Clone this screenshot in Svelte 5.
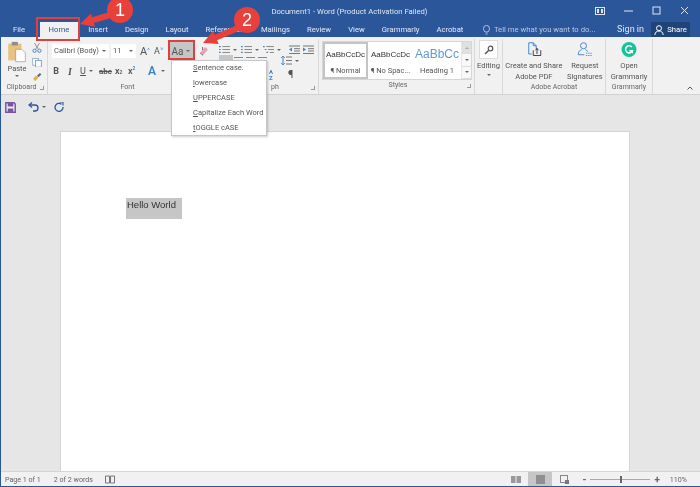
<script>
	const tabs = ['File', 'Home', 'Insert', 'Design', 'Layout', 'References', 'Mailings', 'Review', 'View', 'Grammarly', 'Acrobat'];
	const cases = [
		['S', 'entence case.'],
		['l', 'owercase'],
		['U', 'PPERCASE'],
		['C', 'apitalize Each Word'],
		['t', 'OGGLE cASE']
	];
	const styles = [
		{ sample: 'AaBbCcDc', name: '¶ Normal', cls: 'sel' },
		{ sample: 'AaBbCcDc', name: '¶ No Spac...', cls: '' },
		{ sample: 'AaBbCc', name: 'Heading 1', cls: 'head' }
	];
</script>

<div class="word">
	<header class="titlebar">
		<span class="title">Document1 - Word (Product Activation Failed)</span>
		<div class="winctl">
			<svg width="10" height="8" viewBox="0 0 10 8"><rect x="0.5" y="0.5" width="9" height="7" fill="none" stroke="#dfe6f2"/><rect x="2" y="2" width="2" height="4" fill="#dfe6f2"/><rect x="6" y="2" width="2" height="4" fill="#dfe6f2"/></svg>
			<svg width="9" height="9" viewBox="0 0 9 9"><path d="M0 5h9" stroke="#dfe6f2"/></svg>
			<svg width="9" height="9" viewBox="0 0 9 9"><rect x="1" y="1" width="7" height="7" fill="none" stroke="#dfe6f2"/></svg>
			<svg width="9" height="9" viewBox="0 0 9 9"><path d="M1 1l7 7M8 1l-7 7" stroke="#dfe6f2"/></svg>
		</div>
	</header>

	<nav class="tabs">
		{#each tabs as t}
			<span class="tab" class:active={t === 'Home'}>{t}</span>
		{/each}
		<span class="tell">
			<svg width="7" height="10" viewBox="0 0 7 10"><path d="M2 7C1 5.500.5 5 .5 3.500a3 3 0 0 1 6 0C6.500 5 6 5.500 5 7zM2.500 9h2" fill="none" stroke="#d5deee" stroke-width=".8"/></svg>
			Tell me what you want to do...
		</span>
		<span class="signin">Sign in</span>
		<span class="share">
			<svg width="10" height="10" viewBox="0 0 10 10"><circle cx="5" cy="3.200" r="2.500" fill="none" stroke="#fff"/><path d="M.8 10c.4-3 2-4 4.200-4s3.800 1 4.200 4" fill="none" stroke="#fff"/></svg>
			Share
		</span>
	</nav>

	<section class="ribbon">
		<div class="group clipboard">
			<div class="body clip-body">
				<div class="paste">
					<svg width="20" height="22" viewBox="0 0 22 25">
						<rect x="1" y="3" width="15" height="19" fill="#e8c27f"/>
						<rect x="5" y="1" width="7" height="4" fill="#8d8d8d"/>
						<path d="M9.500 9.500h7l4 4v10h-11z" fill="#fff" stroke="#8a8a8a" stroke-width=".7"/>
					</svg>
					<span>Paste</span>
					<i class="caret"></i>
				</div>
				<div class="clip-tools">
					<svg width="10" height="10" viewBox="0 0 10 10"><path d="M2.500 0l3.500 6M7.500 0L4 6" stroke="#777" stroke-width=".8"/><circle cx="2.500" cy="8" r="1.700" fill="none" stroke="#3f83c8"/><circle cx="7.500" cy="8" r="1.700" fill="none" stroke="#3f83c8"/></svg>
					<svg width="10" height="10" viewBox="0 0 10 10"><rect x=".5" y=".5" width="6" height="7" fill="#fff" stroke="#9ab6d6"/><rect x="3.500" y="2.500" width="6" height="7" fill="#fff" stroke="#7fa0c6"/></svg>
					<svg width="10" height="10" viewBox="0 0 10 10"><path d="M5 4l3-3 1.500 1.500-3 3z" fill="#666"/><path d="M1 7l3-3.500L6.500 6 3 9.500z" fill="#e3b04b"/></svg>
				</div>
			</div>
			<div class="label pad">Clipboard<i class="launch"></i></div>
		</div>

		<div class="group font">
			<div class="body rows">
				<div class="row">
					<span class="combo name">Calibri (Body)<i class="caret"></i></span>
					<span class="combo size">11<i class="caret"></i></span>
					<span class="grow">A<sup>^</sup></span>
					<span class="shrink">A<sup>˅</sup></span>
					<span class="change">Aa<i class="caret"></i></span>
					<svg class="eraser" width="10" height="11" viewBox="0 0 10 11"><path d="M1 7l5-6 3 2.500-5 6z" fill="#e8a0b2"/><path d="M1 7l3 2.500" stroke="#888"/><path d="M3.500 1v3" stroke="#777"/></svg>
				</div>
				<div class="row fmt">
					<b>B</b>
					<em>I</em>
					<u>U</u><i class="caret"></i>
					<s>abc</s>
					<span>x<small>2</small></span>
					<span>x<sup class="up">2</sup></span>
					<span class="effect">A</span><i class="caret"></i>
				</div>
			</div>
			<div class="label pad-font">Font</div>
		</div>

		<div class="group para">
			<div class="body para-rows">
				<div class="row para-top">
					<svg width="11" height="9" viewBox="0 0 13 9"><path d="M0 1h2M0 4.500h2M0 8h2" stroke="#3f83c8" stroke-width="1.400"/><path d="M4 1h9M4 4.500h9M4 8h9" stroke="#777"/></svg><i class="caret"></i>
					<svg width="11" height="9" viewBox="0 0 13 9"><path d="M0 1h2M0 4.500h2M0 8h2" stroke="#3f83c8" stroke-width="1.400"/><path d="M4 1h9M4 4.500h9M4 8h9" stroke="#777"/></svg><i class="caret"></i>
					<svg width="11" height="9" viewBox="0 0 13 9"><path d="M0 1h2M2 4.500h2M4 8h2" stroke="#3f83c8" stroke-width="1.400"/><path d="M4 1h9M6 4.500h7M8 8h5" stroke="#777"/></svg><i class="caret"></i>
					<svg class="indent" width="11" height="9" viewBox="0 0 11 9"><path d="M0 1h11M5 3.700h6M5 6h6M0 8.500h11" stroke="#777"/><path d="M3 2.500L0 4.500l3 2z" fill="#3f83c8"/></svg>
					<svg class="indent2" width="11" height="9" viewBox="0 0 11 9"><path d="M0 1h11M5 3.700h6M5 6h6M0 8.500h11" stroke="#777"/><path d="M0 2.500l3 2-3 2z" fill="#3f83c8"/></svg>
				</div>
				<div class="row para-mid">
					<span class="align-on"></span>
					<span class="align-line"></span>
					<span class="align-line"></span>
					<span class="align-line"></span>
					<svg class="spacing" width="11" height="11" viewBox="0 0 11 11"><path d="M2 1v9" stroke="#3f83c8"/><path d="M0 3l2-2 2 2M0 8l2 2 2-2" fill="none" stroke="#3f83c8" stroke-width=".8"/><path d="M5 2h6M5 5.500h6M5 9h6" stroke="#777"/></svg><i class="caret"></i>
				</div>
				<div class="row para-bot">
					<span class="sort">A<br />Z</span>
					<span class="pilcrow">¶</span>
				</div>
			</div>
			<div class="label para-label">ph<i class="launch"></i></div>
		</div>

		<div class="group styles">
			<div class="body gallery">
				{#each styles as s}
					<div class="style {s.cls}">
						<span class="sample">{s.sample}</span>
						<span class="sname">{s.name}</span>
					</div>
				{/each}
				<div class="scroll">
					<span class="off"><i class="caret up"></i></span>
					<span><i class="caret"></i></span>
					<span><i class="caret"></i></span>
				</div>
			</div>
			<div class="label">Styles<i class="launch"></i></div>
		</div>

		<div class="group editing">
			<div class="body stack">
				<span class="find">
					<svg width="10" height="10" viewBox="0 0 10 10"><circle cx="6.500" cy="3.500" r="2.300" fill="none" stroke="#555" stroke-width="1.200"/><path d="M4.800 5.200L1 9" stroke="#555" stroke-width="1.500"/></svg>
				</span>
				<span class="big">Editing</span>
				<i class="caret"></i>
			</div>
			<div class="label">&nbsp;</div>
		</div>

		<div class="group acrobat">
			<div class="body tools">
				<div class="tool">
					<svg width="18" height="18" viewBox="0 0 20 20"><path d="M3 1h6l4 4v5M9 1v4h4M3 1v15h4" fill="none" stroke="#2f7fd1" stroke-width="1.200"/><path d="M9 11v7h10v-7M14 16v-7M12 11l2-2.500 2 2.500" fill="none" stroke="#222" stroke-width="1.100"/></svg>
					<span>Create and Share<br />Adobe PDF</span>
				</div>
				<div class="tool">
					<svg width="20" height="18" viewBox="0 0 20 20"><circle cx="8" cy="5" r="4" fill="none" stroke="#2f7fd1" stroke-width="1.200"/><path d="M1 17c0-4 2-6 4.500-7M10.500 10c1.500.5 2.500 1.500 3 3M1 17h8" fill="none" stroke="#2f7fd1" stroke-width="1.200"/><path d="M11 15h8M11 18h8" stroke="#2f7fd1" stroke-dasharray="2 1"/></svg>
					<span>Request<br />Signatures</span>
				</div>
			</div>
			<div class="label">Adobe Acrobat</div>
		</div>

		<div class="group grammarly">
			<div class="body tools">
				<div class="tool">
					<svg width="18" height="18" viewBox="0 0 18 18"><circle cx="9" cy="9" r="9" fill="#15c39a"/><path d="M12.500 6a4.300 4.300 0 1 0 .6 4.500H9.500" fill="none" stroke="#fff" stroke-width="1.800"/><path d="M13 11v2.500" stroke="#fff" stroke-width="1.400"/></svg>
					<span>Open<br />Grammarly</span>
				</div>
			</div>
			<div class="label">Grammarly</div>
		</div>

		<div class="collapse">
			<svg width="6" height="4" viewBox="0 0 6 4"><path d="M.5 3.500L3 1l2.500 2.500" fill="none" stroke="#555"/></svg>
		</div>
	</section>

	<div class="qat">
		<svg width="11" height="11" viewBox="0 0 10 10"><path d="M.7.7h7.500l1.100 1.100v7.500H.7z" fill="none" stroke="#7a4fa8" stroke-width="1.300"/><rect x="2.500" y="1" width="5" height="3" fill="#7a4fa8"/><rect x="2.500" y="6" width="5" height="3" fill="#7a4fa8"/></svg>
		<svg class="undo" width="11" height="10" viewBox="0 0 11 10"><path d="M1.500 3h5.500a3 3 0 0 1 0 6H5" fill="none" stroke="#2b579a" stroke-width="1.300"/><path d="M4 .5L1 3l3 2.500" fill="none" stroke="#2b579a" stroke-width="1.200"/></svg>
		<i class="caret"></i>
		<svg class="redo" width="10" height="10" viewBox="0 0 10 10"><path d="M7.500 2.200A4 4 0 1 0 9 5" fill="none" stroke="#2b579a" stroke-width="1.300"/><path d="M5.500 0h3.500v3.500" fill="none" stroke="#2b579a" stroke-width="1.100"/></svg>
	</div>

	<main class="canvas">
		<div class="page">
			<span class="selected">Hello World</span>
		</div>
	</main>

	<footer class="status">
		<span>Page 1 of 1</span>
		<span class="words">2 of 2 words</span>
		<svg class="proof" width="10" height="9" viewBox="0 0 10 9"><path d="M.5 1h4v7h-4zM5.500 1h4v7h-4z" fill="none" stroke="#777"/></svg>
		<div class="views">
			<span class="view"><svg width="10" height="9" viewBox="0 0 10 9"><path d="M0 1h4.500v7H0zM5.500 1H10v7H5.500z" fill="#999"/></svg></span>
			<span class="view on"><svg width="9" height="9" viewBox="0 0 9 9"><rect width="9" height="9" fill="#8f8f8f"/></svg></span>
			<span class="view"><svg width="9" height="9" viewBox="0 0 9 9"><rect x=".5" y=".5" width="7" height="7" fill="none" stroke="#888"/><rect x="5" y="5" width="4" height="4" fill="#777"/></svg></span>
		</div>
		<div class="zoom">
			<span>-</span>
			<div class="slider"><i></i></div>
			<span>+</span>
		</div>
		<span class="pct">110%</span>
	</footer>

	<!-- dropdown of the change-case button -->
	<div class="menu">
		{#each cases as [k, rest]}
			<div class="item"><u>{k}</u>{rest}</div>
		{/each}
	</div>

	<!-- tutorial annotations drawn over the screenshot -->
	<div class="hl hl-home"></div>
	<div class="hl hl-case"></div>
	<svg class="notes" width="700" height="487" viewBox="0 0 700 487">
		<path d="M109.100 12.100L92.100 17.200 91 13.400 80 24l15 2.800-1.100-3.800 17-5.100z" fill="#e8403a"/>
		<circle cx="120" cy="10" r="13" fill="#e8403a"/>
		<path d="M236.800 25.200L214.700 34.700l-1.600-3.600L203 43l15.700.9-1.600-3.600 22.100-9.500z" fill="#e8403a"/>
		<circle cx="247" cy="20" r="13" fill="#e8403a"/>
		<text x="120" y="16" class="num">1</text>
		<text x="247" y="26" class="num">2</text>
	</svg>
</div>

<style>
	:global(body) { margin: 0; }
	.word {
		position: relative;
		width: 700px;
		height: 487px;
		overflow: hidden;
		display: flex;
		flex-direction: column;
		box-sizing: border-box;
		border-left: 1px solid #2b579a;
		border-bottom: 1px solid #2b579a;
		background: #e6e6e6;
		font-family: Roboto, 'Open Sans', sans-serif;
		font-size: 7.500px;
		color: #555;
		filter: blur(0.3px);
	}

	.titlebar {
		height: 22px;
		flex-shrink: 0;
		background: #2b579a;
		display: flex;
		align-items: center;
		justify-content: center;
		position: relative;
		color: #dfe6f2;
		font-size: 7.700px;
	}
	.title { margin-left: -2px; }
	.winctl {
		position: absolute;
		right: 11px;
		top: 6px;
		display: flex;
		align-items: center;
		gap: 19px;
	}

	.tabs {
		height: 15px;
		flex-shrink: 0;
		background: #2b579a;
		display: flex;
		align-items: stretch;
		color: #e3e9f4;
		font-size: 7.700px;
		padding-left: 3.500px;
	}
	.tab { padding: 0 8.500px; line-height: 15px; }
	.tab.active { background: #f1f1f1; color: #2b579a; padding: 0 8.500px; margin: 0 2px 0 6.500px; }
	.tell { display: flex; align-items: center; gap: 4px; margin-left: 11px; color: #b9c7df; white-space: nowrap; }
	.signin { line-height: 15px; margin-left: auto; font-size: 9px; }
	.share {
		margin: 0 10px 0 7px;
		width: 39px;
		background: #1f4478;
		display: flex;
		align-items: center;
		justify-content: center;
		gap: 3px;
		color: #fff;
	}

	.ribbon {
		height: 58px;
		flex-shrink: 0;
		box-sizing: border-box;
		background: #f1f1f1;
		border-bottom: 1px solid #d2d2d2;
		display: flex;
	}
	.group {
		box-sizing: border-box;
		display: flex;
		flex-direction: column;
		border-right: 1px solid #d8d8d8;
		margin-top: 2px;
	}
	.body { flex: 1; min-height: 0; }
	.label {
		height: 12px;
		line-height: 11px;
		text-align: center;
		position: relative;
		color: #666;
		font-size: 7px;
	}
	.label.pad { padding-right: 5px; }
	.label.pad-font { padding-right: 10px; }
	.label.para-label { text-align: left; padding-left: 54px; }
	.launch {
		position: absolute;
		right: 3px;
		top: 4px;
		width: 3px;
		height: 3px;
		border: 1px solid #999;
		border-width: 0 1px 1px 0;
	}
	.caret {
		display: inline-block;
		width: 0;
		height: 0;
		border: 2px solid transparent;
		border-top: 2.500px solid #666;
		border-bottom: 0;
		vertical-align: middle;
	}
	.caret.up { border-top: 0; border-bottom: 2.500px solid #aaa; }

	.clipboard { width: 47px; }
	.clip-body { display: flex; padding: 2px 0 0 6px; }
	.paste { width: 20px; display: flex; flex-direction: column; align-items: center; gap: 1px; line-height: 10px; }
	.clip-tools { display: flex; flex-direction: column; gap: 5px; margin: 2px 0 0 5px; }

	.font { width: 169px; border-right: none; }
	.rows { display: flex; flex-direction: column; padding: 5px 0 0 4px; gap: 6px; }
	.row { display: flex; align-items: center; height: 14px; }
	.combo {
		box-sizing: border-box;
		height: 14px;
		background: #fff;
		font-size: 7.500px;
		line-height: 14px;
		padding-left: 2px;
		display: flex;
		align-items: center;
		justify-content: space-between;
		padding-right: 3px;
		white-space: nowrap;
	}
	.name { width: 57px; margin-right: 2px; }
	.size { width: 25px; margin-right: 4px; }
	.grow, .shrink { font-size: 11px; width: 14px; color: #555; }
	.shrink { font-size: 9px; width: 12px; }
	.grow sup, .shrink sup { font-size: 6px; color: #2f7fd1; line-height: 0; vertical-align: 3px; }
	.change {
		width: 24px;
		height: 18px;
		margin-left: 3px;
		background: #c6c6c6;
		font-size: 10px;
		display: flex;
		align-items: center;
		justify-content: center;
		gap: 3px;
	}
	.eraser { margin-left: 6px; }
	.fmt { margin-left: -3px; }
	.fmt b, .fmt em, .fmt u { width: 14px; text-align: center; font-size: 9px; color: #555; }
	.fmt em { font-family: 'Liberation Serif', serif; font-size: 10px; font-weight: bold; }
	.fmt u { width: 12px; }
	.fmt s { margin-left: 6px; font-size: 8px; font-weight: bold; width: 16px; }
	.fmt span { width: 13px; font-size: 9px; font-weight: 600; }
	.fmt small { font-size: 5px; }
	.up { font-size: 5px; line-height: 0; color: #2f7fd1; }
	.fmt .effect { width: 13px; margin-left: 7px; font-size: 12px; color: #3f83c8; }

	.para { width: 102px; }
	.para-rows { display: flex; flex-direction: column; padding: 6px 0 0 2px; }
	.para-top { height: 10px; }
	.para-top .caret { margin: 0 4px 0 3px; }
	.para-top .indent { margin-left: 4px; }
	.para-top .indent2 { margin-left: 3px; }
	.para-mid { height: 15px; }
	.align-on { width: 14px; height: 8px; background: #c6c6c6; margin: -3px 1px 0 0; }
	.align-line { width: 9px; height: 6px; border-top: 1px solid #888; margin: 0 3px 0 0; }
	.spacing { margin-left: 11px; }
	.para-mid .caret { margin-left: 3px; }
	.para-bot { height: 16px; padding-left: 50px; gap: 15px; }
	.sort { font-size: 6px; line-height: 6px; color: #3f83c8; font-weight: 700; }
	.pilcrow { font-size: 11px; color: #555; }

	.styles { width: 156px; padding-left: 3px; }
	.gallery { display: flex; margin-top: 2px; height: 39px; flex: none; border: 1px solid #d6d6d6; background: #e6e6e6; box-sizing: border-box; width: 150px; }
	.style {
		width: 45px;
		background: #fff;
		display: flex;
		flex-direction: column;
		align-items: center;
		gap: 6px;
		padding-top: 7px;
		box-sizing: border-box;
		overflow: hidden;
		white-space: nowrap;
		font-size: 7.500px;
	}
	.style.sel { border: 2px solid #c4c4c4; padding-top: 5px; }
	.sample { font-family: 'Liberation Sans', sans-serif; font-size: 8px; color: #333; height: 11px; line-height: 11px; }
	.style.head { width: 48px; }
	.head .sample { font-size: 12px; color: #5b9bd5; }
	.scroll { width: 9px; display: flex; flex-direction: column; margin-left: 1px; flex: 1; }
	.scroll span { flex: 1; display: flex; align-items: center; justify-content: center; background: #f8f8f8; border-bottom: 1px solid #ddd; }
	.scroll .off { background: #e0e0e0; }

	.editing { width: 28px; }
	.stack { display: flex; flex-direction: column; align-items: center; padding-top: 1px; }
	.find {
		width: 17px;
		height: 17px;
		background: #fff;
		border: 1px solid #dcdcdc;
		display: flex;
		align-items: center;
		justify-content: center;
	}
	.big { font-size: 7.600px; line-height: 10px; margin: 2px 0 3px; }

	.acrobat { width: 103px; }
	.grammarly { width: 47px; }
	.tools { display: flex; justify-content: space-around; padding-top: 3px; }
	.tool {
		display: flex;
		flex-direction: column;
		align-items: center;
		text-align: center;
		line-height: 11px;
		gap: 3px;
		white-space: nowrap;
	}
	.collapse { flex: 1; display: flex; justify-content: flex-end; align-items: flex-end; padding: 0 7px 4px 0; }

	.qat {
		height: 24px;
		flex-shrink: 0;
		display: flex;
		align-items: center;
		padding-left: 4px;
		gap: 3px;
	}
	.undo { margin-left: 9px; }
	.redo { margin-left: 5px; }

	.canvas { flex: 1; min-height: 0; padding: 12px 70px 0 59px; }
	.page {
		height: 100%;
		background: #fff;
		box-sizing: border-box;
		border: 1px solid #d4d4d4;
		border-bottom: 0;
		padding: 66px 0 0 65px;
		color: #333;
		font-family: 'Liberation Sans', sans-serif;
		font-size: 9.500px;
	}
	.selected {
		display: block;
		width: 56px;
		height: 21px;
		padding-left: 1px;
		box-sizing: border-box;
		background: #c6c6c6;
		line-height: 14px;
	}

	.status {
		height: 14px;
		flex-shrink: 0;
		background: #f1f1f1;
		border-top: 1px solid #d4d4d4;
		display: flex;
		align-items: center;
		padding-left: 4px;
		font-size: 7.100px;
		color: #666;
	}
	.words { margin-left: 13px; }
	.proof { margin-left: 12px; }
	.views { margin-left: auto; display: flex; align-self: stretch; }
	.view { width: 24px; display: flex; align-items: center; justify-content: center; }
	.view.on { background: #c6c6c6; }
	.zoom { display: flex; align-items: center; margin-left: 6px; gap: 4px; font-size: 10px; font-weight: 700; }
	.slider { width: 60px; height: 1px; background: #aaa; position: relative; }
	.slider i { position: absolute; left: 30px; top: -3px; width: 2px; height: 7px; background: #666; }
	.pct { margin: 0 13px 0 10px; }

	.menu {
		position: absolute;
		left: 170px;
		top: 60px;
		width: 96px;
		height: 76px;
		box-sizing: border-box;
		background: #fff;
		border: 1px solid #c6c6c6;
		box-shadow: 1px 1px 2px rgba(0, 0, 0, 0.2);
		padding: 0 0 0 21px;
		font-size: 7.500px;
		color: #555;
	}
	.item { height: 15px; line-height: 14px; white-space: nowrap; }

	.hl { position: absolute; border: 2px solid #e0403c; box-sizing: border-box; }
	.hl-home { left: 35px; top: 17px; width: 44px; height: 24px; }
	.hl-case { left: 167px; top: 40px; width: 27px; height: 20px; }
	.notes { position: absolute; left: -1px; top: 0; }
	.num { fill: #fff; font-family: 'Liberation Sans', sans-serif; font-size: 18px; text-anchor: middle; }
</style>
